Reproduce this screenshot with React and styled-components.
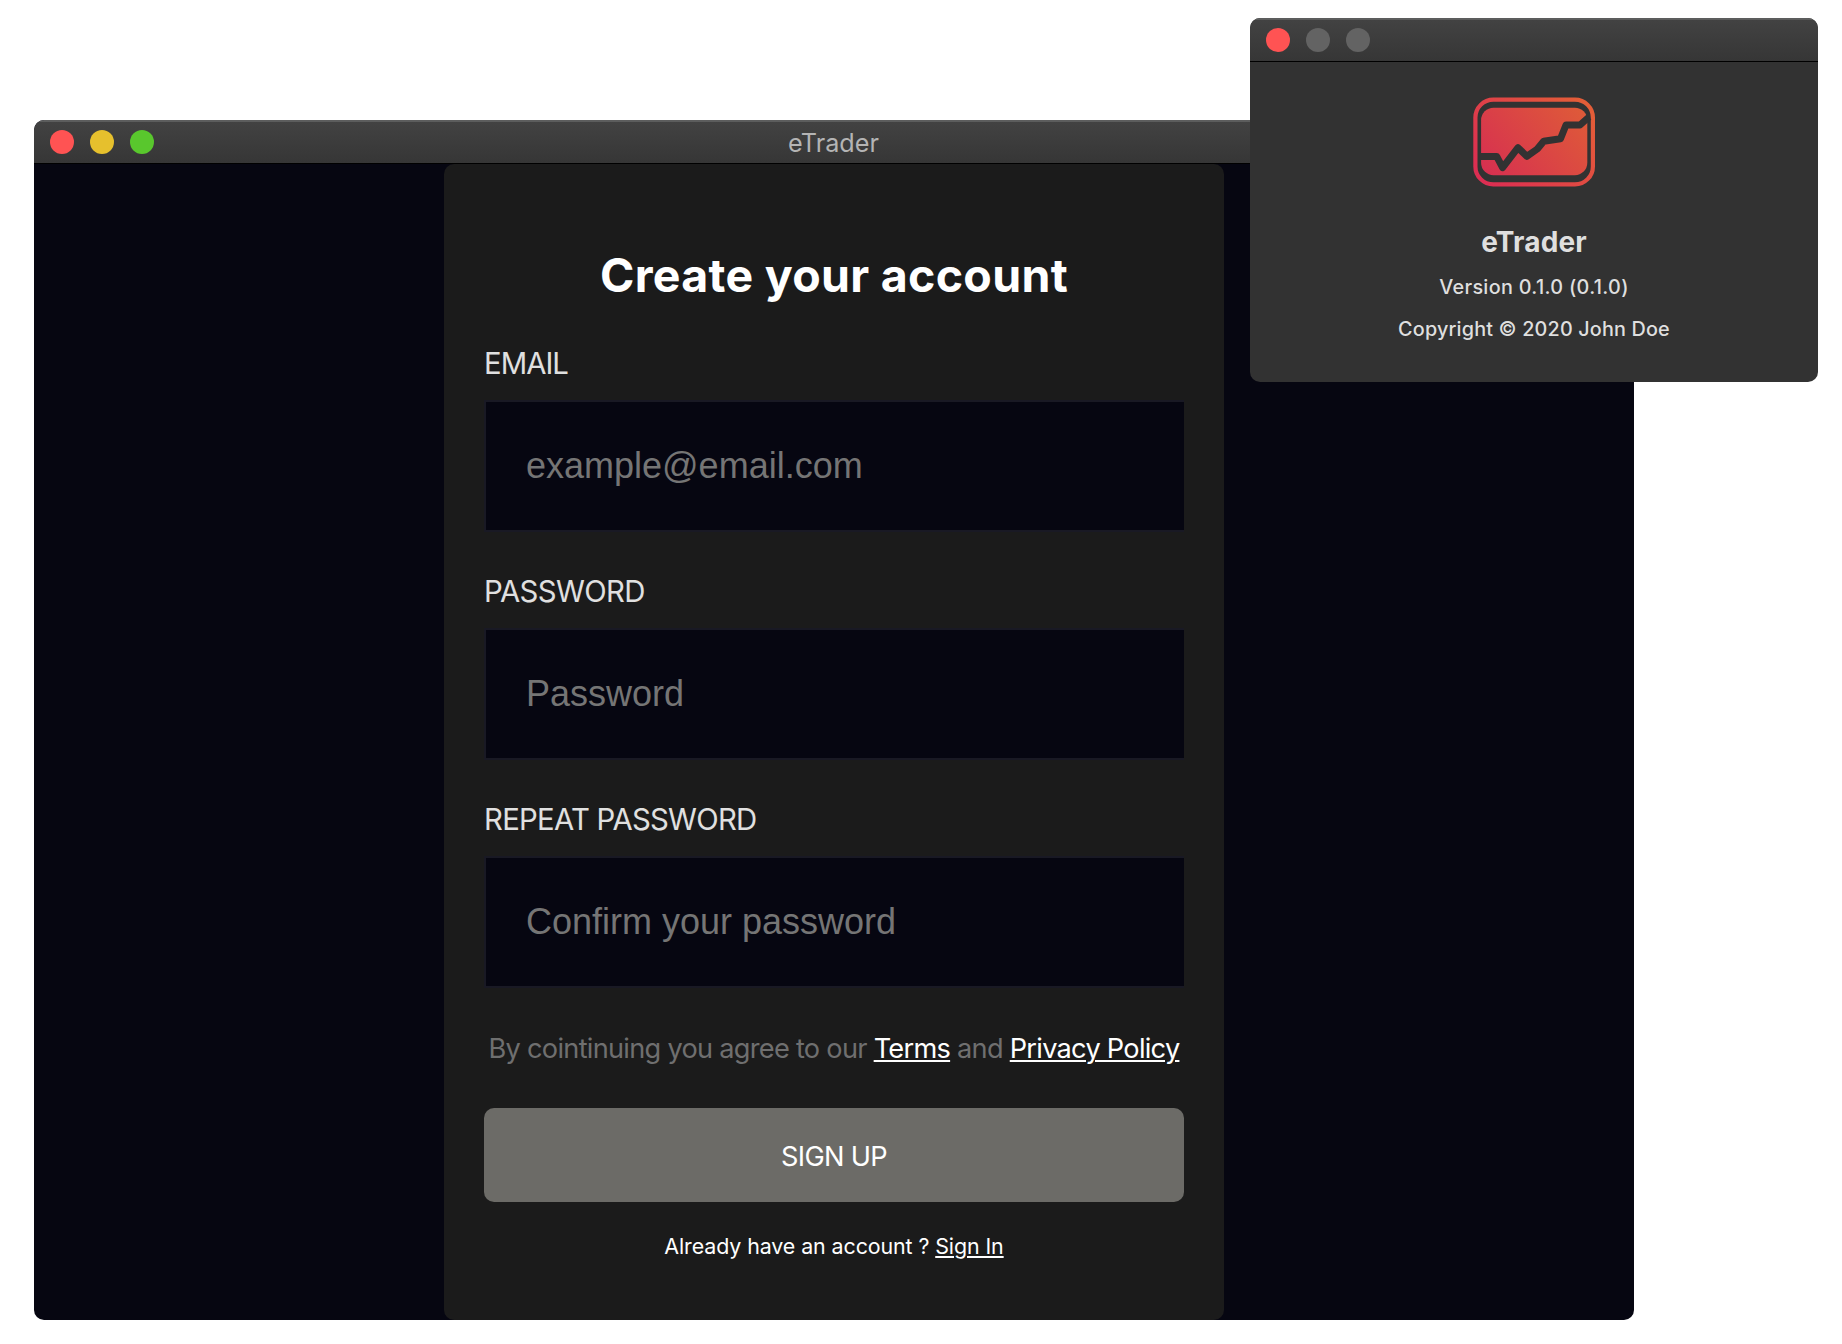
import React from "react";
import styled, { createGlobalStyle } from "styled-components";

const GlobalStyle = createGlobalStyle`
  * { box-sizing: border-box; }
  body {
    margin: 0;
    background: #ffffff;
    font-family: Inter, "Liberation Sans", sans-serif;
  }
`;

const Desktop = styled.div`
  position: relative;
  width: 1842px;
  height: 1344px;
  overflow: hidden;
`;

const Window = styled.section`
  position: absolute;
  left: ${(p) => p.$x}px;
  top: ${(p) => p.$y}px;
  width: ${(p) => p.$w}px;
  height: ${(p) => p.$h}px;
  display: flex;
  flex-direction: column;
  overflow: hidden;
  border-radius: 10px;
  background: ${(p) => p.$bg};
`;

const TitleBar = styled.header`
  display: grid;
  grid-template-columns: 1fr auto 1fr;
  align-items: center;
  flex: none;
  height: 44px;
  padding: 0 16px;
  border-top: 2px solid #5c5d5d;
  border-bottom: 1px solid #000000;
  background: linear-gradient(#424242, #363636);
`;

const Lights = styled.div`
  display: flex;
  gap: 16px;
`;

const Light = styled.span`
  width: 24px;
  height: 24px;
  margin-top: -1px;
  border-radius: 50%;
  background: ${(p) => p.$color};
`;

const WindowTitle = styled.span`
  padding-right: 1px;
  font-size: 25.2px;
  line-height: 32px;
  color: #b4b4b4;
`;

const Body = styled.main`
  display: flex;
  justify-content: center;
  flex: 1;
`;

const Panel = styled.form`
  display: flex;
  flex-direction: column;
  align-items: stretch;
  width: 780px;
  padding: 79px 40px 0;
  border-radius: 10px;
  background: #1b1b1b;
`;

const Heading = styled.h1`
  margin: 0 0 38px;
  font-size: 46.5px;
  line-height: 64px;
  font-weight: 700;
  letter-spacing: 0.3px;
  text-align: center;
  color: #ffffff;
`;

const Field = styled.label`
  display: flex;
  flex-direction: column;
  gap: 17px;
  height: 228px;
`;

const FieldName = styled.span`
  font-size: 29.3px;
  line-height: 38px;
  white-space: nowrap;
  letter-spacing: ${(p) => p.$spacing}px;
  color: #e0e0e0;
`;

const Input = styled.input`
  width: 700px;
  height: 132px;
  padding: 0 40px;
  border: 2px solid #191924;
  border-right-width: 0;
  border-radius: 0;
  outline: none;
  background: #060611;
  font-family: "Liberation Sans", sans-serif;
  font-size: 36px;
  color: #ffffff;
  &::placeholder {
    color: #757575;
    opacity: 1;
  }
`;

const Agreement = styled.p`
  margin: 2px 0 0;
  font-size: 27.2px;
  line-height: 36px;
  letter-spacing: -0.73px;
  text-align: center;
  white-space: nowrap;
  color: #6f6f6f;
`;

const Link = styled.a`
  color: #ffffff;
  text-decoration: underline;
  text-decoration-thickness: 2px;
  text-underline-offset: 2px;
`;

const SubmitButton = styled.button`
  height: 94px;
  margin: 41px 0 0;
  padding: 3px 0 0;
  border: 0;
  border-radius: 10px;
  background: #6c6b67;
  font-family: inherit;
  font-size: 27.2px;
  letter-spacing: -0.68px;
  color: #ffffff;
`;

const SignInLine = styled.p`
  margin: 28px 0 0;
  font-size: 21.4px;
  line-height: 32px;
  letter-spacing: -0.09px;
  text-align: center;
  color: #ffffff;
`;

const About = styled.div`
  display: flex;
  flex-direction: column;
  align-items: center;
  padding-top: 34px;
  color: #dfdfdf;
`;

const AppName = styled.h2`
  margin: 36px 0 6px;
  font-size: 28px;
  line-height: 36px;
  font-weight: 700;
  letter-spacing: 0.15px;
`;

const AboutLine = styled.p`
  margin: 0;
  font-size: 19.8px;
  line-height: 42px;
  font-weight: 500;
  letter-spacing: ${(p) => p.$spacing}px;
`;

function Logo() {
  return (
    <svg width="124" height="92" viewBox="1472 96 124 92">
      <defs>
        <linearGradient id="flame" gradientUnits="userSpaceOnUse" x1="1486" y1="182" x2="1582" y2="102">
          <stop offset="0" stopColor="#dc2e52" />
          <stop offset="1" stopColor="#e45d38" />
        </linearGradient>
      </defs>
      <rect x="1475.4" y="99.6" width="117.5" height="84.8" rx="18" fill="none" stroke="url(#flame)" strokeWidth="4.2" />
      <rect x="1481.1" y="107.7" width="106.2" height="67.5" rx="12.5" fill="url(#flame)" fillOpacity="0.97" />
      <path d="M1480 156.6H1496.8L1502.6 167.6L1518 147.7L1526.8 156.3L1537.3 149L1543.7 141.2L1560.5 138.8L1566 125H1580L1589 117" fill="none" stroke="#323232" strokeWidth="7" strokeLinejoin="round" />
    </svg>
  );
}

const fields = [
  { name: "EMAIL", placeholder: "example@email.com", type: "email", spacing: -0.95 },
  { name: "PASSWORD", placeholder: "Password", type: "password", spacing: -0.62 },
  { name: "REPEAT PASSWORD", placeholder: "Confirm your password", type: "password", spacing: -0.72 },
];

export default function App() {
  return (
    <Desktop>
      <GlobalStyle />
      <Window $x={34} $y={120} $w={1600} $h={1200} $bg="#060611">
        <TitleBar>
          <Lights>
            <Light $color="#ff5353" />
            <Light $color="#e6c02d" />
            <Light $color="#59c72d" />
          </Lights>
          <WindowTitle>eTrader</WindowTitle>
        </TitleBar>
        <Body>
          <Panel>
            <Heading>Create your account</Heading>
            {fields.map((f) => (
              <Field key={f.name}>
                <FieldName $spacing={f.spacing}>{f.name}</FieldName>
                <Input type={f.type} placeholder={f.placeholder} />
              </Field>
            ))}
            <Agreement>
              By cointinuing you agree to our <Link>Terms</Link> and <Link>Privacy Policy</Link>
            </Agreement>
            <SubmitButton type="button">SIGN UP</SubmitButton>
            <SignInLine>
              Already have an account ? <Link>Sign In</Link>
            </SignInLine>
          </Panel>
        </Body>
      </Window>
      <Window $x={1250} $y={18} $w={568} $h={364} $bg="#323232">
        <TitleBar>
          <Lights>
            <Light $color="#ff5353" />
            <Light $color="#636363" />
            <Light $color="#636363" />
          </Lights>
        </TitleBar>
        <About>
          <Logo />
          <AppName>eTrader</AppName>
          <AboutLine $spacing={0.33}>Version 0.1.0 (0.1.0)</AboutLine>
          <AboutLine $spacing={0.17}>Copyright © 2020 John Doe</AboutLine>
        </About>
      </Window>
    </Desktop>
  );
}
